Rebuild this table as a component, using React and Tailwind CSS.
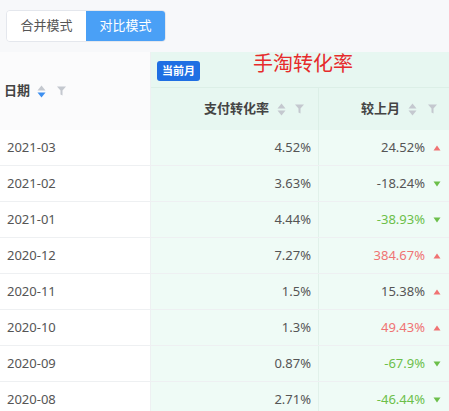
import React from "react";

const rows = [
  { date: "2021-03", rate: "4.52%", diff: "24.52%", tone: "plain", up: true },
  { date: "2021-02", rate: "3.63%", diff: "-18.24%", tone: "plain", up: false },
  { date: "2021-01", rate: "4.44%", diff: "-38.93%", tone: "green", up: false },
  { date: "2020-12", rate: "7.27%", diff: "384.67%", tone: "red", up: true },
  { date: "2020-11", rate: "1.5%", diff: "15.38%", tone: "plain", up: true },
  { date: "2020-10", rate: "1.3%", diff: "49.43%", tone: "red", up: true },
  { date: "2020-09", rate: "0.87%", diff: "-67.9%", tone: "green", up: false },
  { date: "2020-08", rate: "2.71%", diff: "-46.44%", tone: "green", up: false },
];

const toneClass = {
  plain: "text-[#555]",
  red: "text-[#f07373]",
  green: "text-[#6cbf4a]",
};

const SortIcon = ({ active }) => (
  <svg width="9" height="13" viewBox="0 0 9 13" className="shrink-0">
    <path d="M4.5 0.5 L8.5 5.5 L0.5 5.5 Z" fill="#c4c8cf" />
    <path d="M0.5 7.5 L8.5 7.5 L4.5 12.5 Z" fill={active ? "#3d8ff0" : "#c4c8cf"} />
  </svg>
);

const FilterIcon = () => (
  <svg width="9" height="10" viewBox="0 0 9 10" className="shrink-0">
    <path d="M0 0.5 H9 L5.5 4.5 V9.5 L3.5 8.5 V4.5 Z" fill="#c4c8cf" />
  </svg>
);

const Arrow = ({ up }) => (
  <svg width="8" height="6" viewBox="0 0 8 6" className="shrink-0">
    {up ? (
      <path d="M4 0.5 L7.5 5.5 L0.5 5.5 Z" fill="#f07373" />
    ) : (
      <path d="M0.5 0.5 L7.5 0.5 L4 5.5 Z" fill="#6cbf4a" />
    )}
  </svg>
);

export default function App() {
  return (
    <div
      className="w-[449px] h-[411px] overflow-hidden bg-white text-[13px] text-[#555]"
      style={{ fontFamily: '"Noto Sans", "Noto Sans CJK SC", sans-serif' }}
    >
      {/* mode switch */}
      <div className="h-[52px] bg-[#f7f8fa] flex items-start pt-[10px] pl-[6px]">
        <div className="flex h-[32px] rounded-[4px] border border-[#e4e7ed] overflow-hidden">
          <button className="w-[79px] bg-white text-[13px] text-[#555]">合并模式</button>
          <button className="w-[79px] bg-[#4aa0f6] text-[13px] text-white">对比模式</button>
        </div>
      </div>

      {/* header */}
      <div className="grid grid-cols-[151px_168px_130px] h-[78px] border-b border-[#eceef1]">
        <div className="row-span-2 flex items-center gap-[7px] pl-[4px] bg-[#fbfbfc] border-r border-[#eef0f2]">
          <span className="font-bold text-[#444]">日期</span>
          <SortIcon active />
          <span className="ml-[4px]"><FilterIcon /></span>
        </div>
        <div className="col-span-2 h-[36px] bg-[#e7f7f1] flex items-start border-b border-[#dcefe7]">
          <span className="mt-[9px] ml-[6px] h-[20px] px-[5px] rounded-[3px] bg-[#1f6fe3] text-white text-[11px] font-bold leading-[20px]">
            当前月
          </span>
          <span className="ml-[53px] mt-[1px] text-[20px] leading-[22px] text-[#e62b2b]">手淘转化率</span>
        </div>
        <div className="h-[42px] bg-[#e7f7f1] flex items-center justify-end gap-[8px] pr-[14px] border-r border-[#dcefe7]">
          <span className="font-bold text-[#444]">支付转化率</span>
          <SortIcon />
          <span className="ml-[1px]"><FilterIcon /></span>
        </div>
        <div className="h-[42px] bg-[#e7f7f1] flex items-center justify-end gap-[8px] pr-[12px]">
          <span className="font-bold text-[#444]">较上月</span>
          <SortIcon />
          <span className="ml-[3px]"><FilterIcon /></span>
        </div>
      </div>

      {/* body */}
      {rows.map((r) => (
        <div
          key={r.date}
          className="grid grid-cols-[151px_168px_130px] h-[36px] border-b border-[#eef0f2]"
        >
          <div className="flex items-center pl-[7px] border-r border-[#eef0f2]">{r.date}</div>
          <div className="flex items-center justify-end pr-[7px] bg-[#effbf6] border-r border-[#e1f1ea]">
            {r.rate}
          </div>
          <div className="flex items-center justify-end gap-[8px] pr-[8px] bg-[#effbf6]">
            <span className={toneClass[r.tone]}>{r.diff}</span>
            <Arrow up={r.up} />
          </div>
        </div>
      ))}
    </div>
  );
}
